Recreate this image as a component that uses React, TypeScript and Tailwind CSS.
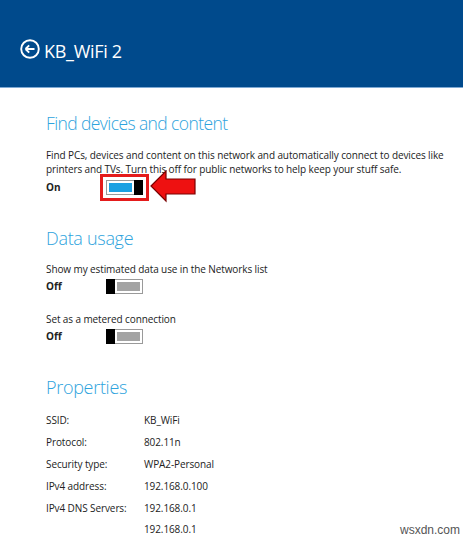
import React from "react";

function ToggleOn() {
    return (
        <div className="flex h-[15px] w-[37px]">
            <div className="flex-1 border border-r-0 border-[#9a9a9a] p-[2px]">
                <div className="h-full bg-[#1ba1e2]" />
            </div>
            <div className="w-[9px] bg-black" />
        </div>
    );
}

function ToggleOff() {
    return (
        <div className="flex h-[15px] w-[37px]">
            <div className="w-[9px] bg-black" />
            <div className="flex-1 border border-l-0 border-[#9a9a9a] p-[2px]">
                <div className="h-full bg-[#a3a3a3]" />
            </div>
        </div>
    );
}

function Arrow() {
    return (
        <svg width="48" height="34" viewBox="0 0 48 34" className="absolute left-[44px] top-[-10px]">
            <path d="M1 16 L16 1 L16 9 L45 9 L45 24 L16 24 L16 31 Z" fill="#ee1111" stroke="#7a0000" strokeWidth="1.2" strokeLinejoin="miter" />
        </svg>
    );
}

const props = [
    ["SSID:", "KB_WiFi"],
    ["Protocol:", "802.11n"],
    ["Security type:", "WPA2-Personal"],
    ["IPv4 address:", "192.168.0.100"],
    ["IPv4 DNS Servers:", "192.168.0.1"],
    ["", "192.168.0.1"],
];

export default function App() {
    return (
        <div className="relative h-[541px] w-[463px] overflow-hidden bg-white font-['Open_Sans',sans-serif] text-[#222]">
            {/* header */}
            <div className="flex h-[88px] items-start border-b border-[#7ea9d4] bg-[#004a8c] pl-[20px] pt-[39px] text-white">
                <svg width="20" height="20" viewBox="0 0 20 20" className="mr-[4px]">
                    <circle cx="10" cy="10" r="8.8" fill="none" stroke="white" strokeWidth="1.9" />
                    <path d="M5.5 10 H14.5 M5.5 10 L9.2 6.3 M5.5 10 L9.2 13.7" fill="none" stroke="white" strokeWidth="1.9" />
                </svg>
                <span className="mt-[-1px] text-[18px] leading-[26px] tracking-[-0.3px]">KB_WiFi 2</span>
            </div>

            <div className="pl-[46px]">
                <h2 className="mt-[22px] text-[17.5px] leading-[26px] font-light tracking-[-0.6px] text-[#2ea3dd]">Find devices and content</h2>
                <p className="mt-[12px] w-[400px] text-[10px] leading-[14px] tracking-[-0.1px]">
                    Find PCs, devices and content on this network and automatically connect to devices like printers and TVs. Turn this off for public networks to help keep your stuff safe.
                </p>
                <div className="mt-[4px] flex h-[15px] items-center">
                    <span className="w-[60px] text-[10px] font-bold">On</span>
                    <div className="relative">
                        <ToggleOn />
                        <div className="absolute -inset-x-[6px] -inset-y-[6px] border-[3px] border-[#e41b1b]" />
                        <Arrow />
                    </div>
                </div>

                <h2 className="mt-[30px] text-[18px] leading-[26px] font-light tracking-[-0.3px] text-[#2ea3dd]">Data usage</h2>
                <p className="mt-[11px] text-[10px] leading-[14px] tracking-[-0.1px]">Show my estimated data use in the Networks list</p>
                <div className="mt-[3px] flex h-[15px] items-center">
                    <span className="w-[60px] text-[10px] font-bold">Off</span>
                    <ToggleOff />
                </div>
                <p className="mt-[18px] text-[10px] leading-[14px] tracking-[-0.1px]">Set as a metered connection</p>
                <div className="mt-[3px] flex h-[15px] items-center">
                    <span className="w-[60px] text-[10px] font-bold">Off</span>
                    <ToggleOff />
                </div>

                <h2 className="mt-[30px] text-[18px] leading-[26px] font-light tracking-[-0.3px] text-[#2ea3dd]">Properties</h2>
                <div className="mt-[10px] flex flex-col">
                    {props.map(([k, v], i) => (
                        <div key={i} className="flex h-[21.8px] items-center text-[10px] tracking-[-0.1px]">
                            <span className="w-[98px]">{k}</span>
                            <span>{v}</span>
                        </div>
                    ))}
                </div>
            </div>

            <span className="absolute right-[3px] bottom-[2px] text-[12px] text-[#555] font-['Liberation_Sans',sans-serif]">wsxdn.com</span>
        </div>
    );
}
